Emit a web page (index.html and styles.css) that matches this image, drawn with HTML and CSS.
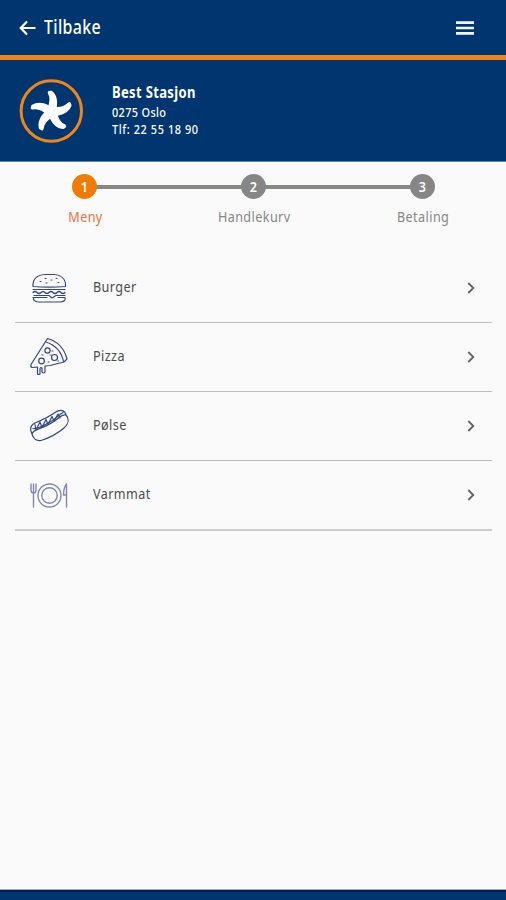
FILE: index.html
```html
<!DOCTYPE html>
<html lang="no">
<head>
<meta charset="utf-8">
<title>Best Stasjon</title>
<link rel="stylesheet" href="styles.css">
</head>
<body>
<header class="topbar">
  <svg class="back" viewBox="0 0 17 16"><path d="M16.5 8H2M8 1.5 1.7 8 8 14.5"/></svg>
  <span class="title"><span class="text">Tilbake</span></span>
  <svg class="menu" viewBox="0 0 18 14"><path d="M0 1.7h18M0 7h18M0 12.3h18"/></svg>
</header>
<section class="station">
  <svg class="logo" viewBox="0 0 64 64">
    <defs><path id="arm" d="M30.500 13.500C33 18 32.500 25 29.500 31L34 35.500C37.500 27 37.500 18 32 13.500Z"/></defs>
    <circle cx="32.300" cy="32" r="30.200"/>
    <g class="star">
      <use href="#arm"/>
      <use href="#arm" transform="rotate(72 32.500 32.800)"/>
      <use href="#arm" transform="rotate(144 32.500 32.800)"/>
      <use href="#arm" transform="rotate(216 32.500 32.800)"/>
      <use href="#arm" transform="rotate(288 32.500 32.800)"/>
    </g>
  </svg>
  <div class="address">
    <div class="name"><span class="text">Best Stasjon</span></div>
    <div><span class="text">0275 Oslo</span></div>
    <div class="phone"><span class="text">Tlf: 22 55 18 90</span></div>
  </div>
</section>
<main>
  <ol class="steps">
    <li class="step active"><b><span class="text">1</span></b><span class="label text">Meny</span></li>
    <li class="step"><b><span class="text">2</span></b><span class="label text">Handlekurv</span></li>
    <li class="step"><b><span class="text">3</span></b><span class="label text">Betaling</span></li>
  </ol>
  <ul class="list">
    <li>
      <svg class="icon" viewBox="0 0 40 40"><path d="M4 18.500C3.500 10.500 9 7 16 6.500H25C32 7 37 11 36.500 18.500Q20 19.700 4 18.500ZM4 21.500H36M4 24.500q2-2 4 0t4 0 4 0 4 0 4 0 4 0 4 0 4 0M5 27.500H20l3 2.500 4-2.500H36M4 29.500H18M29 29.500H36M4.500 29.500C4 32 6 34 9 34H31C35 34 37 32 36 29.500"/><path class="dots" d="M11 13.500h1M16 10.500h1M17 15h1M22 12h1M27 10.500h1M29 14.500h1"/></svg>
      <span class="item"><span class="text">Burger</span></span>
      <svg class="chev" viewBox="0 0 8 12"><path d="m1.300 1 5 5-5 5"/></svg>
    </li>
    <li>
      <svg class="icon" viewBox="0 0 40 40"><path d="M18.500 1.500C29 4.500 35.500 12 38 22L35 25 21 28.500 16 29V35q-1.500 2-3 0V31q-2-1-2 1v5q-1.500 1-2.500 0V30L3 30.500Q1.500 30 2 27.500L18.500 1.500ZM17 5C26 8 32.500 15 34.500 24.500"/><circle cx="18.500" cy="13.500" r="2.600"/><circle cx="25.500" cy="20.500" r="3"/><circle cx="12.500" cy="24" r="2.800"/><path class="dots" d="M21 18h1M23 14h1M19 25h1M13 18h1M29 24h.5"/></svg>
      <span class="item"><span class="text">Pizza</span></span>
      <svg class="chev" viewBox="0 0 8 12"><path d="m1.300 1 5 5-5 5"/></svg>
    </li>
    <li>
      <svg class="icon" viewBox="0 0 40 40"><path d="M3 28C.5 23 2 19 6 17C13 14 20 11 26 6.500C31 3 36 4 37 9M3 28C4 24.500 7 24 11 22.500C20 19 25 16 30 11.500Q34 8 37 9C40.500 13 39.500 18 35 22C28 28 20 32 12 34.500C7 35.500 4 32 3 28ZM4 22.500C10 23 15 19 21 16S29 9 34 6.500"/><path d="M6 18.500 7 24l4-8 2 5.500 4-8 2 5 4-8 2 4.500 4-7 2 4"/></svg>
      <span class="item"><span class="text">Pølse</span></span>
      <svg class="chev" viewBox="0 0 8 12"><path d="m1.300 1 5 5-5 5"/></svg>
    </li>
    <li>
      <svg class="icon soft" viewBox="0 0 40 40"><circle cx="20.500" cy="20.500" r="11.500"/><circle cx="20.500" cy="20.500" r="7.700"/><path d="M2 9v6q0 3 2.500 3T7 15V9M4.500 9v23M37.500 9q-3 4-3 11h3ZM37.500 20v12"/></svg>
      <span class="item"><span class="text">Varmmat</span></span>
      <svg class="chev" viewBox="0 0 8 12"><path d="m1.300 1 5 5-5 5"/></svg>
    </li>
  </ul>
</main>
<footer class="bottom"></footer>
</body>
</html>
```

FILE: styles.css
```css
* { box-sizing: border-box; }
body {
  margin: 0;
  height: 900px;
  display: flex;
  flex-direction: column;
  overflow: hidden;
  background: #fafafa;
  color: #4c4c4c;
  font-family: "Noto Sans", "Open Sans", sans-serif;
}
svg { display: block; flex: none; fill: none; }
ul, ol { list-style: none; margin: 0; padding: 0; }
.text { display: inline-block; transform: scaleX(.84); transform-origin: left; white-space: nowrap; }
.topbar {
  height: 60px;
  display: flex;
  align-items: center;
  padding: 0 32px 0 19px;
  background: #00366f;
  border-bottom: 5px solid #ef8418;
  color: #fff;
}
.back { width: 17px; height: 16px; stroke: #fff; stroke-width: 2.2; }
.title { flex: 1; margin: 0 0 2px 8px; font-size: 19px; font-weight: 500; line-height: 26px; letter-spacing: .4px; }
.menu { width: 18px; height: 14px; stroke: #f4f4ff; stroke-width: 2.7; }
.station {
  height: 102px;
  display: flex;
  align-items: center;
  padding-left: 19px;
  background: #00366f;
  border-bottom: 1px solid #6482a5;
  color: #fff;
}
.logo { width: 64px; height: 64px; }
.logo circle { stroke: #ef8418; stroke-width: 3; }
.star { fill: #fff; stroke: #fff; stroke-width: 3.6; stroke-linejoin: round; }
.address { margin: -1px 0 0 29px; font-size: 13px; font-weight: 500; line-height: 17.500px; letter-spacing: .4px; }
.name { margin-bottom: 2px; font-size: 15.500px; font-weight: 700; line-height: 20px; letter-spacing: .4px; }
.phone { letter-spacing: .7px; }
main { flex: 1; padding: 12px 14px 0; }
.steps { display: flex; justify-content: space-between; padding: 0 15px; }
.step { position: relative; width: 110px; display: flex; flex-direction: column; align-items: center; color: #868686; }
.step + .step::before { content: ""; position: absolute; z-index: -1; right: 50%; top: 11px; width: 169px; height: 4px; background: #868884; }
.step b {
  width: 25px;
  height: 25px;
  border-radius: 50%;
  background: #868686;
  color: #fff;
  font-size: 15px;
  font-weight: 600;
  line-height: 25px;
  text-align: center;
}
.step .text { transform-origin: center; }
.label { margin: 7px 0 0 2px; font-size: 15px; line-height: 20px; letter-spacing: .5px; }
.active { color: #f0713a; }
.active b { background: #f07c05; }
.list { margin: 28px 0 0 1px; }
.list li {
  height: 69px;
  display: flex;
  align-items: center;
  padding: 0 17px 0 14px;
  border-bottom: 1px solid #bebebe;
}
.list li:last-child { height: 70px; border-bottom: 2px solid #cecece; }
.icon { width: 40px; height: 40px; stroke: #35457d; stroke-width: 1.2; stroke-linejoin: round; stroke-linecap: round; }
.soft { stroke: #8089aa; stroke-width: 1.4; }
.dots { stroke-width: 1; }
.item { flex: 1; margin: 0 0 4px 24px; font-size: 15px; line-height: 20px; letter-spacing: .5px; }
.chev { width: 8px; height: 12px; stroke: #626262; stroke-width: 1.8; }
.bottom { height: 10px; background: #00366f; border-top: 2px solid #001b5f; box-shadow: 0 -1px #aaa9b5; }
```
